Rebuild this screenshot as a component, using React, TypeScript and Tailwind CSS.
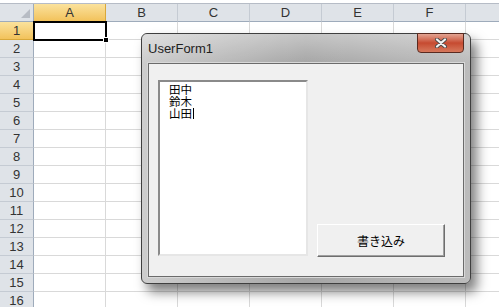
import React from "react";

const cols = ["A", "B", "C", "D", "E", "F", ""];
const rows = Array.from({ length: 16 }, (_, i) => i + 1);
const names = ["田中", "鈴木", "山田"];

function Sheet() {
  return (
    <div className="flex flex-col">
      <div className="h-[4px] bg-white border-b border-[#b6bcc6]" />
      <div className="grid grid-cols-[34px_repeat(7,72px)]">
        {/* header row */}
        <div className="h-[18px] bg-[#dfe3e8] border-r border-b border-[#9eabbb] relative">
          <div className="absolute right-[3px] bottom-[3px] w-0 h-0 border-l-[9px] border-l-transparent border-b-[9px] border-b-[#b7bcc4]" />
        </div>
        {cols.map((c, i) => (
          <div
            key={`h-${i}`}
            className={`h-[18px] flex items-center justify-center border-r border-b text-[13px] leading-none text-[#333] ${
              c === "A"
                ? "bg-gradient-to-b from-[#fbe29c] to-[#f2c25a] border-r-[#d9a83a] border-b-[#d9a83a]"
                : "bg-[#dfe3e8] border-r-[#c5cbd3] border-b-[#9eabbb]"
            }`}
          >
            {c}
          </div>
        ))}
        {rows.map((r) => (
          <React.Fragment key={`r-${r}`}>
            <div
              className={`h-[18px] flex items-center justify-center border-r border-b text-[13px] leading-none text-[#333] ${
                r === 1
                  ? "bg-gradient-to-b from-[#fbe29c] to-[#f2c25a] border-r-[#d9a83a] border-b-[#d9a83a]"
                  : "bg-[#dfe3e8] border-r-[#9eabbb] border-b-[#c5cbd3]"
              }`}
            >
              {r}
            </div>
            {cols.map((_, i) => (
              <div key={`c-${r}-${i}`} className="h-[18px] bg-white border-r border-b border-[#d9d9d9]" />
            ))}
          </React.Fragment>
        ))}
      </div>
    </div>
  );
}

function UserForm() {
  return (
    <div className="absolute left-[141px] top-[33px] w-[330px] h-[251px] rounded-[6px] border border-[#3f3f3f] shadow-[6px_8px_12px_rgba(0,0,0,0.5)] bg-gradient-to-r from-[#cdcdcd] via-[#a6a6a6] to-[#bcbcbc] flex flex-col">
      <div className="relative h-[29px] flex items-center pl-[6px] rounded-t-[5px] bg-gradient-to-b from-[rgba(255,255,255,0.35)] to-transparent">
        <span className="text-[13px] text-[#1e1e1e] pt-[1px]" style={{ fontFamily: '"Liberation Sans", Arial, sans-serif' }}>
          UserForm1
        </span>
        <div className="absolute right-[6px] top-[-1px] w-[47px] h-[20px] rounded-b-[4px] border border-[#5a2a20] bg-gradient-to-b from-[#e2a392] via-[#c64a30] to-[#d6785c] flex items-center justify-center">
          <svg width="14" height="10" viewBox="0 0 14 10">
            <path d="M3 1.5 L11 8.5 M11 1.5 L3 8.5" stroke="#4a4a4a" strokeWidth="4" strokeLinecap="round" />
            <path d="M3 1.5 L11 8.5 M11 1.5 L3 8.5" stroke="#f4f4f4" strokeWidth="2.2" strokeLinecap="round" />
          </svg>
        </div>
      </div>
      <div className="mx-[6px] h-[214px] border border-[#6b6b6b] shadow-[0_0_0_1px_#d8d8d8] bg-[#f0f0f0] flex items-start">
        <div className="ml-[9px] mt-[16px] w-[150px] h-[176px] bg-white border-t-2 border-l-2 border-t-[#8a8a8a] border-l-[#8a8a8a] border-r-2 border-b-2 border-r-[#e6e6e6] border-b-[#e6e6e6] pl-[9px] pt-[1px]">
          <div
            className="text-[11.5px] leading-[12px] text-black whitespace-pre-line"
            style={{ fontFamily: '"Noto Sans CJK JP", sans-serif' }}
          >
            {names.join("\n")}
            <span className="inline-block w-[1px] h-[11px] bg-black ml-[1px] align-[-1px]" />
          </div>
        </div>
        <button
          className="ml-[9px] mt-[160px] w-[128px] h-[33px] bg-[#f0f0f0] border border-t-white border-l-white border-r-[#6e6e6e] border-b-[#6e6e6e] shadow-[inset_-1px_-1px_0_#a0a0a0] text-[12px] text-black flex items-center justify-center"
          style={{ fontFamily: '"Noto Sans CJK JP", sans-serif' }}
        >
          書き込み
        </button>
      </div>
    </div>
  );
}

export default function App() {
  return (
    <div
      className="relative w-[499px] h-[307px] overflow-hidden bg-white"
      style={{ fontFamily: '"Liberation Sans", Arial, "Noto Sans CJK JP", sans-serif' }}
    >
      <Sheet />
      <UserForm />
      <div className="absolute left-[33px] top-[21px] w-[74px] h-[20px] border-2 border-black pointer-events-none" />
      <div className="absolute left-[103px] top-[37px] w-[6px] h-[6px] bg-black border border-white" />
    </div>
  );
}
